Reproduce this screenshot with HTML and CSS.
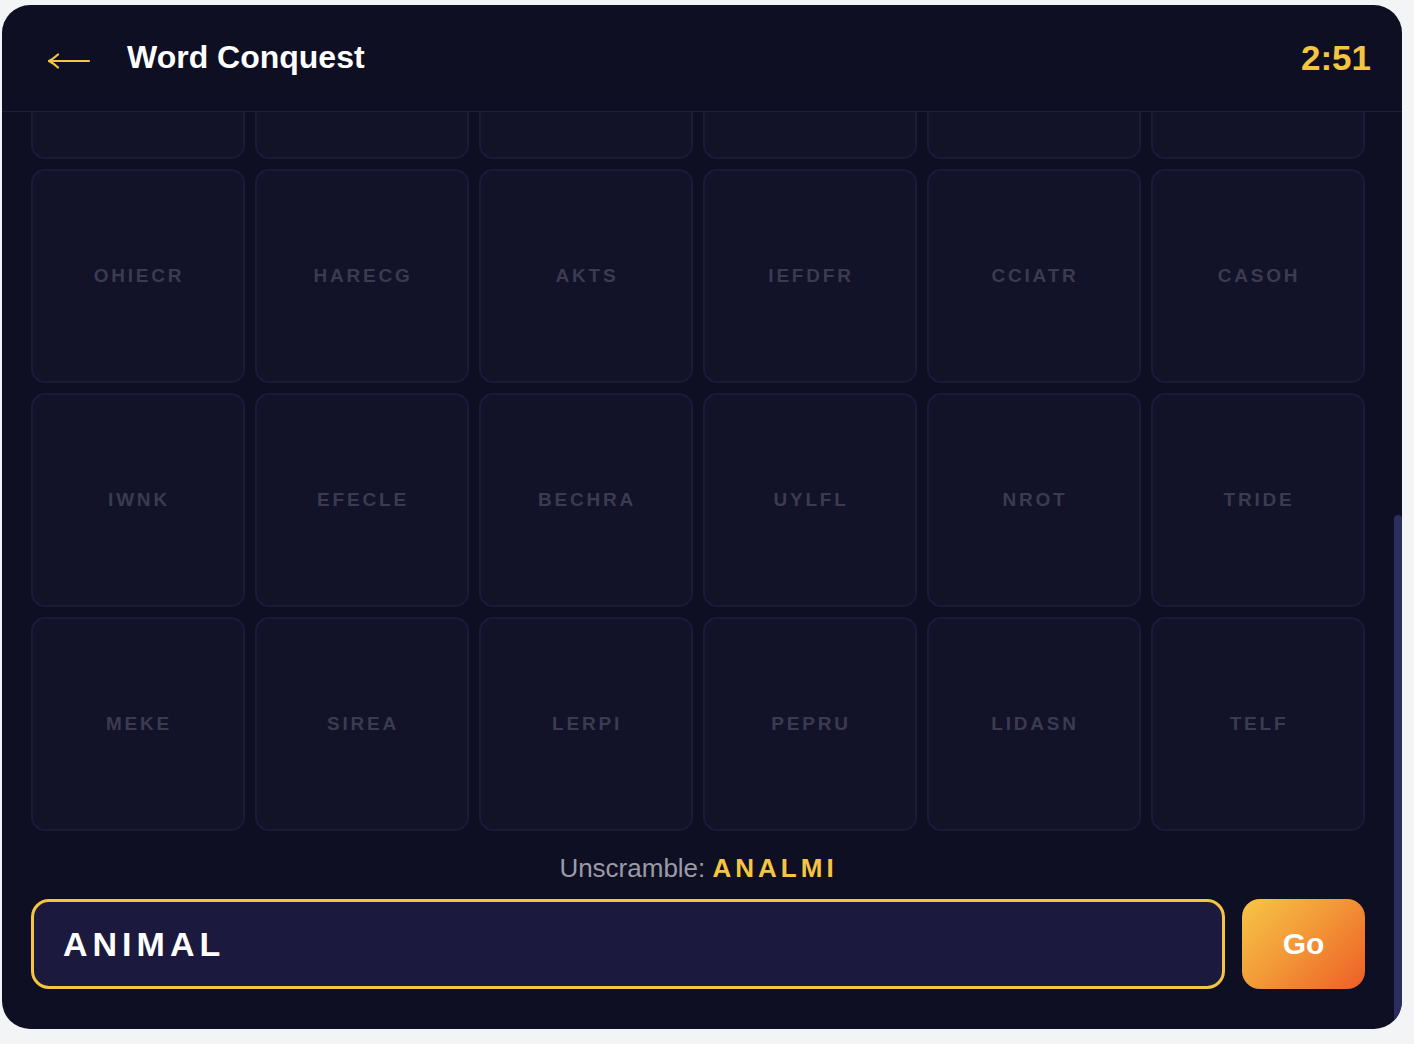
FILE: index.html
```html
<!DOCTYPE html>
<html lang="en">
<head>
<meta charset="utf-8">
<title>Word Conquest</title>
<link rel="stylesheet" href="styles.css">
</head>
<body>
<div class="card">
  <header class="header">
    <div class="header-left">
      <button class="back" aria-label="Back">
        <svg width="44" height="18" viewBox="0 0 44 18" fill="none" stroke="#f5c542" stroke-width="2.2" stroke-linecap="round" stroke-linejoin="round">
          <path d="M2 9 H42"/>
          <path d="M11 2.5 Q6 7 2 9 Q6 11 11 15.5"/>
        </svg>
      </button>
      <h1 class="title">Word Conquest</h1>
    </div>
    <div class="timer">2:51</div>
  </header>
  <div class="board">
    <div class="board-inner">
      <div class="grid">
        <div class="tile"></div>
        <div class="tile"></div>
        <div class="tile"></div>
        <div class="tile"></div>
        <div class="tile"></div>
        <div class="tile"></div>
        <div class="tile">OHIECR</div>
        <div class="tile">HARECG</div>
        <div class="tile">AKTS</div>
        <div class="tile">IEFDFR</div>
        <div class="tile">CCIATR</div>
        <div class="tile">CASOH</div>
        <div class="tile">IWNK</div>
        <div class="tile">EFECLE</div>
        <div class="tile">BECHRA</div>
        <div class="tile">UYLFL</div>
        <div class="tile">NROT</div>
        <div class="tile">TRIDE</div>
        <div class="tile">MEKE</div>
        <div class="tile">SIREA</div>
        <div class="tile">LERPI</div>
        <div class="tile">PEPRU</div>
        <div class="tile">LIDASN</div>
        <div class="tile">TELF</div>
      </div>
      <p class="prompt">Unscramble: <span class="scrambled">ANALMI</span></p>
      <form class="answer">
        <input class="answer-input" type="text" value="ANIMAL">
        <button class="go" type="button">Go</button>
      </form>
    </div>
  </div>
  <div class="scroll-thumb"></div>
</div>
</body>
</html>
```
FILE: styles.css
```css
* { box-sizing: border-box; }

html, body {
  margin: 0;
  padding: 0;
  background: #f3f4f6;
  font-family: "Liberation Sans", Arial, sans-serif;
}

body {
  padding: 5px 0 0 2px;
  height: 1044px;
  overflow: hidden;
}

.card {
  position: relative;
  width: 1400px;
  height: 1024px;
  background: #0e0f23;
  border-radius: 28px;
  overflow: hidden;
  display: flex;
  flex-direction: column;
}

.header {
  flex: 0 0 auto;
  height: 107px;
  border-bottom: 1px solid #1e1e40;
  display: flex;
  align-items: center;
  justify-content: space-between;
  padding: 0 31px 2px 45px;
}

.header-left {
  display: flex;
  align-items: center;
  gap: 36px;
}

.back {
  background: none;
  border: 0;
  padding: 0;
  margin: 7px 0 0 0;
  display: flex;
  cursor: pointer;
}

.title {
  margin: 0;
  color: #ffffff;
  font-size: 32px;
  font-weight: 700;
  line-height: 1;
}

.timer {
  color: #f5c542;
  font-size: 35px;
  font-weight: 700;
  line-height: 1;
}

.board {
  flex: 1 1 auto;
  min-height: 0;
  overflow-y: auto;
  display: flex;
  flex-direction: column-reverse;
  scrollbar-width: none;
}

.board::-webkit-scrollbar {
  display: none;
}

.board-inner {
  padding: 0 37px 40px 29px;
}

.grid {
  display: grid;
  grid-template-columns: repeat(6, 214px);
  grid-auto-rows: 214px;
  gap: 10px;
}

.tile {
  background: #121229;
  border: 2px solid #1a1a3a;
  border-radius: 14px;
  display: flex;
  align-items: center;
  justify-content: center;
  color: #3b3b50;
  font-size: 19px;
  font-weight: 700;
  letter-spacing: 2.8px;
  padding-left: 2px;
}

.prompt {
  margin: 23px 0 17px;
  text-align: center;
  color: #9b9ba8;
  font-size: 26px;
  line-height: 28px;
  padding-left: 1px;
}

.scrambled {
  color: #f5c542;
  font-weight: 700;
  letter-spacing: 4px;
}

.answer {
  display: flex;
  gap: 17px;
  margin: 0;
}

.answer-input {
  flex: 1 1 auto;
  min-width: 0;
  height: 90px;
  background: #1b1a3e;
  border: 3px solid #f5c542;
  border-radius: 18px;
  outline: none;
  color: #ffffff;
  font-family: "Liberation Sans", Arial, sans-serif;
  font-size: 34px;
  font-weight: 700;
  letter-spacing: 5px;
  padding: 0 0 0 29px;
}

.go {
  flex: 0 0 123px;
  height: 90px;
  border: 0;
  border-radius: 18px;
  background: linear-gradient(135deg, #f7c645 0%, #f29a38 45%, #ee5e26 100%);
  color: #ffffff;
  font-family: "Liberation Sans", Arial, sans-serif;
  font-size: 30px;
  font-weight: 700;
  cursor: pointer;
}

.scroll-thumb {
  position: absolute;
  right: 0;
  top: 510px;
  width: 8px;
  height: 530px;
  background: #2c2c5e;
  border-radius: 4px;
}
```
